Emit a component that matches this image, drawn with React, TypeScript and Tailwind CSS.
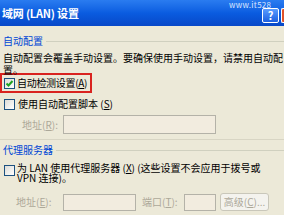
function CheckBox({ checked }: { checked?: boolean }) {
  return (
    <span className="w-[11px] h-[11px] shrink-0 border border-[#1c5180] bg-gradient-to-br from-[#dcdcd7] to-white flex items-center justify-center">
      {checked && (
        <svg width="9" height="9" viewBox="0 0 9 9">
          <path d="M1.5 4.5 L3.5 6.5 L7.5 2" stroke="#21a121" strokeWidth="2" fill="none" />
        </svg>
      )}
    </span>
  );
}

function GroupHeader({ label }: { label: string }) {
  return (
    <div className="flex items-center gap-[3px] h-[12px]">
      <span className="text-[#0046d5] leading-[12px]">{label}</span>
      <span className="flex-1 h-px bg-[#d0d0bf]" />
    </div>
  );
}

export default function App() {
  return (
    <div
      className="w-[284px] h-[215px] overflow-hidden bg-[#ece9d8] text-[10px] text-black relative"
      style={{ fontFamily: '"Noto Sans CJK SC", "Liberation Sans", sans-serif' }}
    >
      {/* title bar */}
      <div className="h-[26px] flex items-center justify-between bg-gradient-to-b from-[#2a7cf0] via-[#0a5ce0] to-[#0848c8] pl-[2px]">
        <span className="text-white font-bold text-[11px] leading-none tracking-[-0.2px]">
          域网 (LAN) 设置
        </span>
        <div className="flex items-center gap-[2px] mt-[5px] -mr-[2px]">
          <span className="w-[17px] h-[15px] rounded-[2px] border border-white bg-gradient-to-b from-[#5a9cff] to-[#1c5fe0] text-white font-bold text-[11px] leading-none flex items-center justify-center">
            ?
          </span>
          <span className="w-[5px] h-[15px] rounded-l-[2px] border border-r-0 border-white bg-[#e0522a]" />
        </div>
        <span className="absolute left-[229px] top-[1px] text-[8px] leading-none text-[#dfe8ff] tracking-[0.3px]">
          www.it528
        </span>
      </div>

      <div className="pl-[3px] pr-0 pt-[9px]">
        <GroupHeader label="自动配置" />
        <p className="mt-[5px] leading-[12px] whitespace-nowrap">
          自动配置会覆盖手动设置。要确保使用手动设置，请禁用自动配
          <br />
          置。
        </p>

        <div className="mt-[-3px] -ml-[3px] w-[92px] h-[20px] border-2 border-[#d9231f] flex items-center pl-[2px] gap-[2px]">
          <CheckBox checked />
          <span className="leading-[12px] whitespace-nowrap tracking-[-0.3px]">自动检测设置(<u>A</u>)</span>
        </div>

        <div className="mt-[5px] h-[12px] flex items-center gap-[3px] pl-[1px]">
          <CheckBox />
          <span className="leading-[12px] whitespace-nowrap">使用自动配置脚本 (<u>S</u>)</span>
        </div>

        <div className="mt-[5px] flex items-center h-[19px]">
          <span className="w-[60px] pl-[19px] text-[#aca899] leading-[12px] whitespace-nowrap">地址(<u>R</u>):</span>
          <span className="w-[153px] h-[19px] border border-[#b4b2a8] bg-[#f2ecdf]" />
        </div>
      </div>

      <div className="mt-[5px] h-px bg-[#d8d5c4]" />

      <div className="pl-[3px] pt-[4px]">
        <GroupHeader label="代理服务器" />
        <div className="mt-[7px] flex items-start gap-[2px] pl-[1px]">
          <span className="mt-[2px]">
            <CheckBox />
          </span>
          <span className="leading-[10px] whitespace-nowrap">
            为 LAN 使用代理服务器 (<u>X</u>) (这些设置不会应用于拨号或
            <br />
            VPN 连接)。
          </span>
        </div>

        <div className="mt-[10px] flex items-center h-[18px]">
          <span className="w-[60px] pl-[13px] text-[#aca899] leading-[12px] whitespace-nowrap">地址(<u>E</u>):</span>
          <span className="w-[73px] h-[17px] border border-[#b4b2a8] bg-[#f2ecdf]" />
          <span className="w-[48px] pl-[6px] text-[#aca899] leading-[12px] whitespace-nowrap">端口(<u>T</u>):</span>
          <span className="w-[32px] h-[17px] border border-[#b4b2a8] bg-[#f2ecdf]" />
          <span className="ml-[4px] w-[49px] h-[18px] rounded-[3px] border border-[#c9c7ba] bg-[#f4f3ee] text-[#aca899] leading-none flex items-center justify-center whitespace-nowrap">
            高级(<u>C</u>)...
          </span>
        </div>
      </div>
    </div>
  );
}
